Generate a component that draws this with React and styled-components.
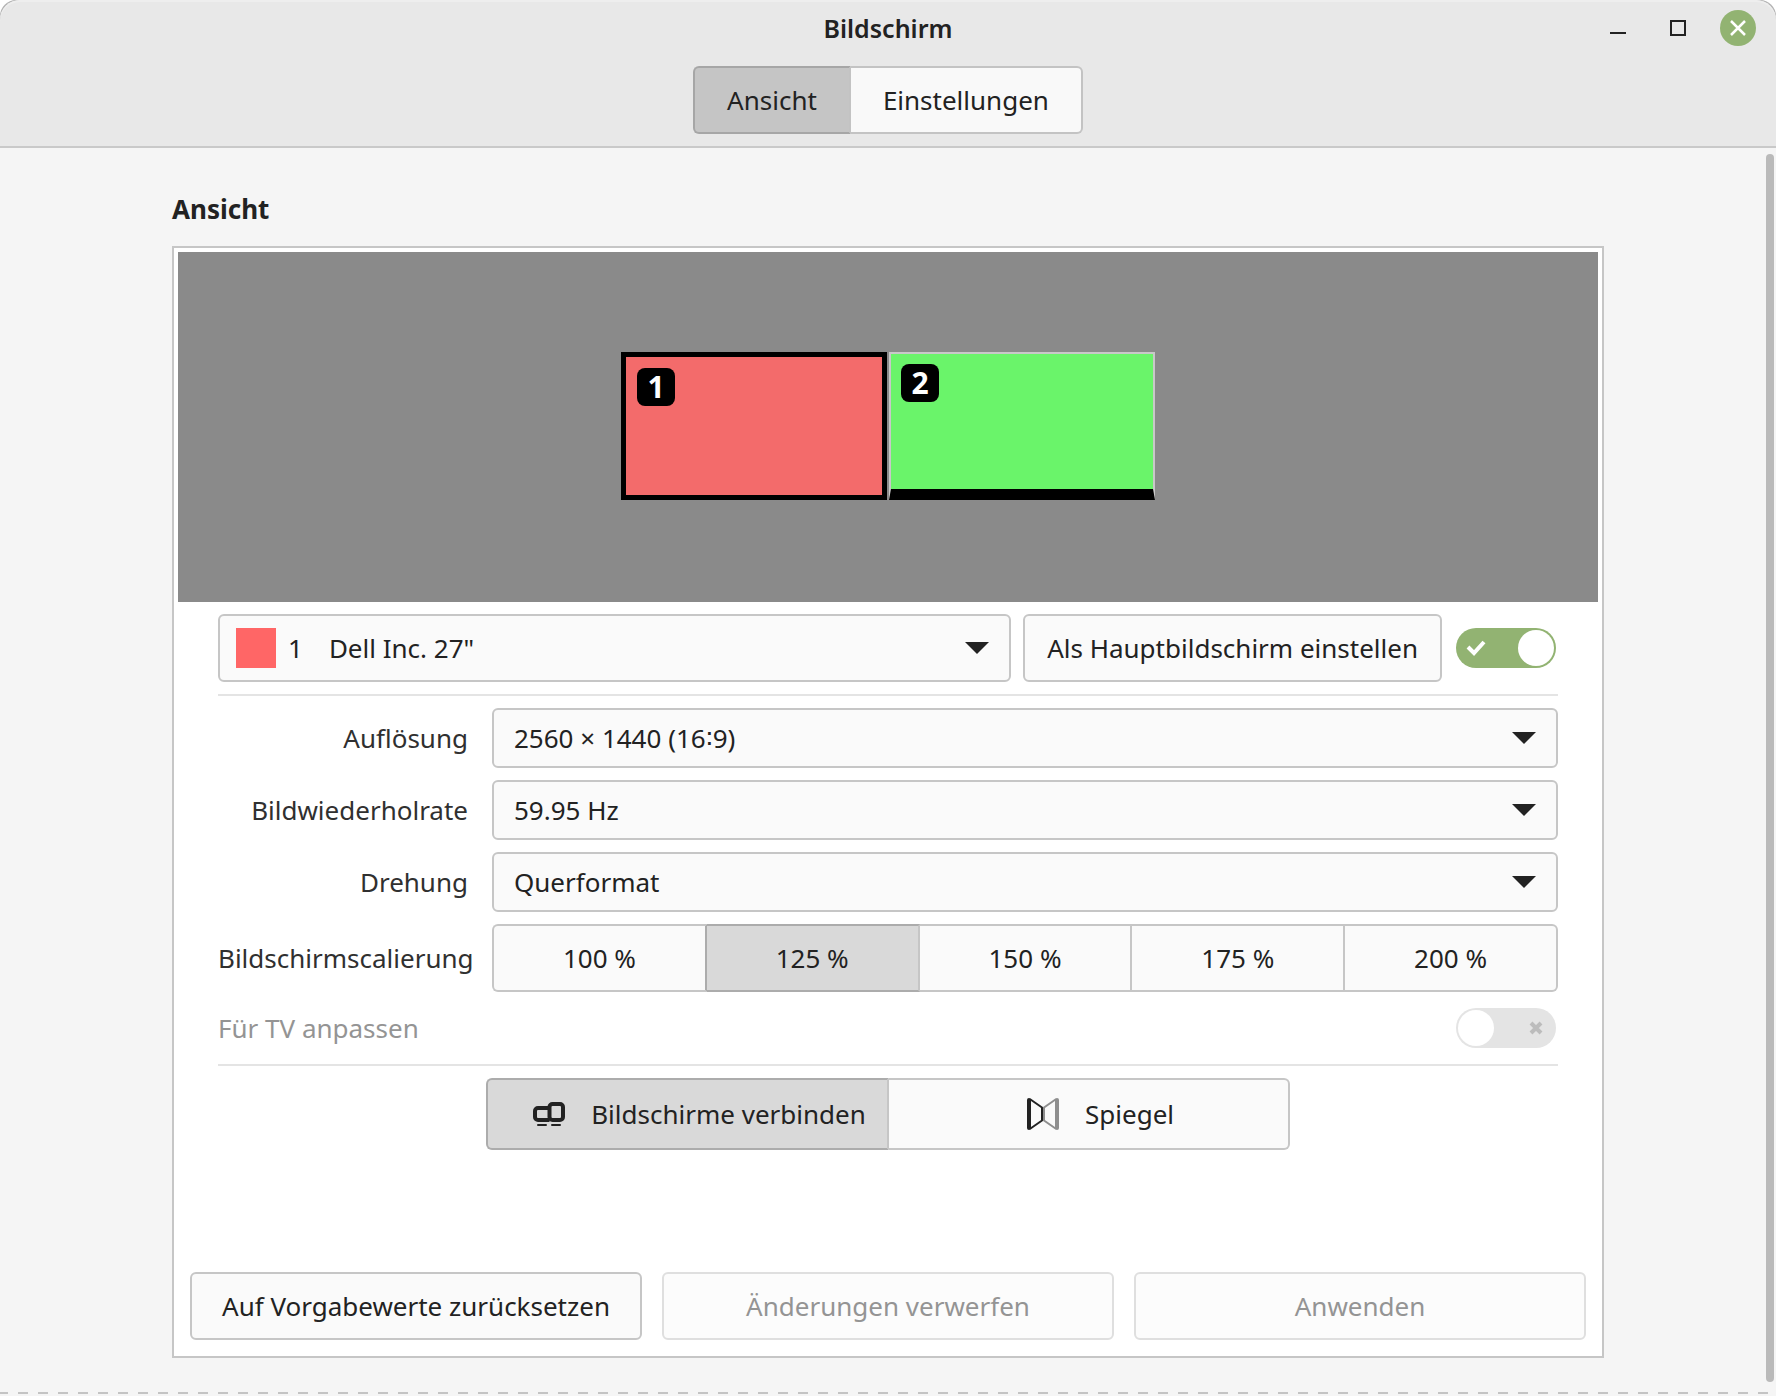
import React, { useState } from "react";
import styled, { createGlobalStyle, css } from "styled-components";

const GlobalStyle = createGlobalStyle`
  * {
    box-sizing: border-box;
  }

  body {
    margin: 0;
    background: white;
    color: #222222;
    font-family: "Noto Sans", "Open Sans", sans-serif;
    font-size: 26px;
    line-height: 34px;
  }

  button, input, select {
    margin: 0;
    color: inherit;
    font: inherit;
  }
`;

const Window = styled.div`
  display: flex;
  flex-direction: column;
  min-height: 100vh;
  overflow: hidden;
  border-radius: 16px 16px 0 0;
  background: #b4b4b4;
`;

const Header = styled.header`
  display: flex;
  flex-direction: column;
  align-items: center;
  padding-bottom: 12px;
  border-bottom: 2px solid #c9c9c9;
  border-radius: 20px 20px 0 0;
  background: #e8e8e8;
  box-shadow: inset 0 2px #eeeeee;
`;

const TitleBar = styled.div`
  display: grid;
  grid-template-columns: 1fr auto 1fr;
  align-items: center;
  width: 100%;
  height: 56px;
  margin-bottom: 10px;
  padding: 0 20px;
`;

const Title = styled.h1`
  grid-column: 2;
  margin: 0;
  font-size: 25px;
  font-weight: 600;
`;

const WindowControls = styled.div`
  display: flex;
  justify-content: flex-end;
  gap: 24px;
`;

const ControlButton = styled.button`
  display: grid;
  place-items: center;
  width: 36px;
  height: 36px;
  padding: 0;
  border: 0;
  border-radius: 18px;
  background: ${({ $close }) => ($close ? "#92b372" : "transparent")};
  color: ${({ $close }) => ($close ? "white" : "#222222")};
`;

const Tabs = styled.div`
  display: flex;
`;

const Tab = styled.button`
  height: 68px;
  padding: 0 32px;
  border: 2px solid #c3c3c3;
  border-left: 0;
  border-radius: 0 6px 6px 0;
  background: #f9f9f9;

  ${({ $active }) =>
    $active &&
    css`
      border-color: #a6a6a6 #c3c3c3 #a6a6a6 #a6a6a6;
      border-left: 2px solid #a6a6a6;
      border-radius: 6px 0 0 6px;
      background: #c5c5c5;
    `}
`;

const Content = styled.main`
  position: relative;
  display: flex;
  flex: 1;
  flex-direction: column;
  padding: 44px 172px 34px;
  background: #f5f5f5;
`;

const ScrollThumb = styled.div`
  position: absolute;
  top: 6px;
  right: 2px;
  bottom: 10px;
  width: 8px;
  border-radius: 4px;
  background: #bababa;
`;

const Heading = styled.h2`
  margin: 0 0 20px;
  font-size: 26px;
  font-weight: 700;
`;

const Panel = styled.section`
  display: flex;
  flex: 1;
  flex-direction: column;
  padding: 4px;
  border: 2px solid #c6c6c6;
  background: white;
`;

const Arrangement = styled.div`
  display: flex;
  align-items: center;
  justify-content: center;
  gap: 2px;
  height: 350px;
  background: #8a8a8a;
`;

const Monitor = styled.div`
  width: 266px;
  height: 148px;
  margin-bottom: 2px;
  padding: 10px;
  border: 2px solid #c8c8c8;
  border-bottom: 11px solid black;
  background: #6af46a;

  ${({ $selected }) =>
    $selected &&
    css`
      padding: 11px;
      border: 5px solid black;
      background: #f36b6b;
    `}
`;

const Badge = styled.span`
  display: grid;
  place-items: center;
  width: 38px;
  height: 38px;
  border-radius: 8px;
  background: black;
  color: white;
  font-size: 30px;
  font-weight: 700;
`;

const Settings = styled.div`
  display: flex;
  flex-direction: column;
  gap: 12px;
  padding: 12px 40px;
`;

const Row = styled.div`
  display: flex;
  align-items: center;
  gap: 12px;
`;

const Fields = styled.div`
  display: grid;
  grid-template-columns: 256px 1fr;
  align-items: center;
  gap: 12px 18px;
`;

const Label = styled.label`
  padding-right: 6px;
  color: #303030;
  text-align: right;
`;

const GroupLabel = styled.span`
  color: #303030;
`;

const Combo = styled.div`
  display: flex;
  flex: 1;
  align-items: center;
  height: ${({ $tall }) => ($tall ? "68px" : "60px")};
  border: 2px solid #c6c6c6;
  border-radius: 6px;
  background: #fafafa;
`;

const Swatch = styled.span`
  width: 40px;
  height: 40px;
  margin: 0 12px 0 16px;
  background: #ff6666;
`;

const MonitorNumber = styled.label`
  margin-right: 6px;
`;

const SelectArea = styled.div`
  display: grid;
  flex: 1;
  align-items: center;
  height: 100%;

  > * {
    grid-area: 1 / 1;
  }

  > svg {
    justify-self: end;
    margin-right: 20px;
    pointer-events: none;
  }
`;

const Select = styled.select`
  width: 100%;
  height: 100%;
  padding: 0 20px;
  border: 0;
  background: transparent;
  appearance: none;
`;

const Button = styled.button`
  height: 68px;
  padding: 0 22px;
  border: 2px solid #c6c6c6;
  border-radius: 6px;
  background: #fafafa;
  white-space: nowrap;

  &:disabled {
    border-color: #dfdfdf;
    background: #fcfcfc;
    color: #949494;
  }
`;

const SwitchBox = styled.span`
  display: grid;
  align-items: center;
  margin: 0 2px;

  > * {
    grid-area: 1 / 1;
  }

  > svg {
    justify-self: ${({ $on }) => ($on ? "start" : "end")};
    margin: 0 10px;
    pointer-events: none;
  }
`;

const SwitchInput = styled.input`
  display: flex;
  width: 100px;
  height: 40px;
  padding: 2px;
  border-radius: 20px;
  background: #e4e4e4;
  appearance: none;

  &::before {
    width: 36px;
    height: 36px;
    border-radius: 18px;
    background: white;
    content: "";
  }

  &:checked {
    justify-content: flex-end;
    background: #92b372;
  }
`;

const TvRow = styled.div`
  display: flex;
  align-items: center;
  justify-content: space-between;
  padding: 4px 0;
  color: #949494;
`;

const Divider = styled.hr`
  width: 100%;
  height: 2px;
  margin: 0;
  border: 0;
  background: #e4e4e4;
`;

const Segments = styled.div`
  display: flex;
  align-self: center;
  width: ${({ $width }) => $width || "auto"};
`;

const Segment = styled.label`
  display: flex;
  flex: 1 1 0;
  align-items: center;
  justify-content: center;
  gap: 26px;
  box-sizing: content-box;
  height: ${({ $tall }) => ($tall ? "68px" : "64px")};
  padding-left: ${({ $tall }) => ($tall ? "24px" : "0")};
  border: solid #c6c6c6;
  border-width: 2px 2px 2px 0;
  background: #fafafa;
  white-space: nowrap;

  &:first-child {
    border-left-width: 2px;
    border-radius: 6px 0 0 6px;
  }

  &:last-child {
    border-radius: 0 6px 6px 0;
  }

  &:has(+ label input:checked) {
    border-right-color: #acacac;
  }

  &:has(input:checked) {
    border-color: #acacac #c6c6c6 #acacac #acacac;
    background: #d9d9d9;
  }

  input {
    position: absolute;
    opacity: 0;
    pointer-events: none;
  }
`;

const Actions = styled.div`
  display: grid;
  grid-template-columns: repeat(3, 1fr);
  gap: 20px;
  margin-top: auto;
  padding: 12px;
`;

const BottomEdge = styled.div`
  height: 4px;
  border-bottom: 2px solid #f5f5f5;
  background: repeating-linear-gradient(
    90deg,
    #c4c4c4 0 8px,
    #f5f5f5 8px 18px,
    #c4c4c4 18px 20px
  );
`;

const ArrowIcon = () => (
  <svg width="24" height="12" viewBox="0 0 24 12" fill="#222222" aria-hidden="true">
    <path d="M0 0h24L12 12z" />
  </svg>
);

const CheckIcon = () => (
  <svg width="20" height="16" viewBox="0 0 20 16" fill="none" stroke="white" strokeWidth="4" aria-hidden="true">
    <path d="M2 7l6 6L18 2" />
  </svg>
);

const CrossIcon = () => (
  <svg width="20" height="14" viewBox="0 0 20 14" stroke="#bcbcbc" strokeWidth="4" aria-hidden="true">
    <path d="M5 2l10 10M15 2L5 12" />
  </svg>
);

const JoinIcon = () => (
  <svg width="32" height="32" viewBox="0 0 32 32" fill="none" stroke="#222222" aria-hidden="true">
    <path d="M16.5 10H5a3 3 0 0 0-3 3v6a3 3 0 0 0 3 3h11.5" strokeWidth="4" />
    <rect x="16.5" y="6" width="13.5" height="16" rx="3" strokeWidth="4" />
    <path d="M5 27h8M19 27h8" strokeWidth="2" strokeLinecap="round" />
  </svg>
);

const MirrorIcon = () => (
  <svg width="32" height="32" viewBox="0 0 32 32" fill="none" strokeLinejoin="round" strokeLinecap="round" aria-hidden="true">
    <path d="M28.5 1.5L17 9.5v13l11.5 8" stroke="#8e8e8e" strokeWidth="2" />
    <path d="M30 2v28" stroke="#8e8e8e" strokeWidth="4" />
    <path d="M3.5 1.5L15 9.5v13l-11.5 8" stroke="#222222" strokeWidth="2" />
    <path d="M2 2v28" stroke="#222222" strokeWidth="4" />
  </svg>
);

const SCALES = ["100 %", "125 %", "150 %", "175 %", "200 %"];

const FIELDS = [
  { id: "resolution", label: "Auflösung", value: "2560 × 1440 (16∶9)" },
  { id: "rate", label: "Bildwiederholrate", value: "59.95 Hz" },
  { id: "rotation", label: "Drehung", value: "Querformat" },
];

const App = () => {
  const [scale, setScale] = useState("125 %");
  const [mode, setMode] = useState("join");
  const [enabled, setEnabled] = useState(true);

  return (
    <>
      <GlobalStyle />
      <Window>
        <Header>
          <TitleBar>
            <Title>Bildschirm</Title>
            <WindowControls>
              <ControlButton aria-label="Minimieren">
                <svg width="16" height="16" viewBox="0 0 16 16" fill="currentColor">
                  <path d="M0 12h16v2H0z" />
                </svg>
              </ControlButton>
              <ControlButton aria-label="Maximieren">
                <svg width="16" height="16" viewBox="0 0 16 16" fill="none" stroke="currentColor" strokeWidth="2">
                  <path d="M1 1h14v14H1z" />
                </svg>
              </ControlButton>
              <ControlButton $close aria-label="Schließen">
                <svg width="16" height="16" viewBox="0 0 16 16" stroke="currentColor" strokeWidth="2.5">
                  <path d="M1 1l14 14M15 1L1 15" />
                </svg>
              </ControlButton>
            </WindowControls>
          </TitleBar>
          <Tabs role="tablist">
            <Tab role="tab" aria-selected="true" $active>
              Ansicht
            </Tab>
            <Tab role="tab" aria-selected="false">
              Einstellungen
            </Tab>
          </Tabs>
        </Header>

        <Content>
          <Heading>Ansicht</Heading>
          <Panel>
            <Arrangement>
              <Monitor $selected>
                <Badge>1</Badge>
              </Monitor>
              <Monitor>
                <Badge>2</Badge>
              </Monitor>
            </Arrangement>

            <Settings>
              <Row>
                <Combo $tall>
                  <Swatch />
                  <MonitorNumber htmlFor="monitor">1</MonitorNumber>
                  <SelectArea>
                    <Select id="monitor">
                      <option>Dell Inc. 27"</option>
                    </Select>
                    <ArrowIcon />
                  </SelectArea>
                </Combo>
                <Button>Als Hauptbildschirm einstellen</Button>
                <SwitchBox $on={enabled}>
                  <SwitchInput
                    type="checkbox"
                    aria-label="Bildschirm aktiv"
                    checked={enabled}
                    onChange={(e) => setEnabled(e.target.checked)}
                  />
                  {enabled ? <CheckIcon /> : <CrossIcon />}
                </SwitchBox>
              </Row>

              <Divider />

              <Fields>
                {FIELDS.map(({ id, label, value }) => (
                  <React.Fragment key={id}>
                    <Label htmlFor={id}>{label}</Label>
                    <Combo>
                      <SelectArea>
                        <Select id={id}>
                          <option>{value}</option>
                        </Select>
                        <ArrowIcon />
                      </SelectArea>
                    </Combo>
                  </React.Fragment>
                ))}
                <GroupLabel id="scale">Bildschirmscalierung</GroupLabel>
                <Segments role="radiogroup" aria-labelledby="scale">
                  {SCALES.map((value) => (
                    <Segment key={value}>
                      <input
                        type="radio"
                        name="scale"
                        checked={scale === value}
                        onChange={() => setScale(value)}
                      />
                      {value}
                    </Segment>
                  ))}
                </Segments>
              </Fields>

              <TvRow>
                <label htmlFor="tv">Für TV anpassen</label>
                <SwitchBox>
                  <SwitchInput type="checkbox" id="tv" disabled />
                  <CrossIcon />
                </SwitchBox>
              </TvRow>

              <Divider />

              <Segments $width="804px" role="radiogroup" aria-label="Anordnung">
                <Segment $tall>
                  <input
                    type="radio"
                    name="mode"
                    checked={mode === "join"}
                    onChange={() => setMode("join")}
                  />
                  <JoinIcon />
                  Bildschirme verbinden
                </Segment>
                <Segment $tall>
                  <input
                    type="radio"
                    name="mode"
                    checked={mode === "mirror"}
                    onChange={() => setMode("mirror")}
                  />
                  <MirrorIcon />
                  Spiegel
                </Segment>
              </Segments>
            </Settings>

            <Actions>
              <Button>Auf Vorgabewerte zurücksetzen</Button>
              <Button disabled>Änderungen verwerfen</Button>
              <Button disabled>Anwenden</Button>
            </Actions>
          </Panel>
          <ScrollThumb />
        </Content>
        <BottomEdge />
      </Window>
    </>
  );
};

export default App;
